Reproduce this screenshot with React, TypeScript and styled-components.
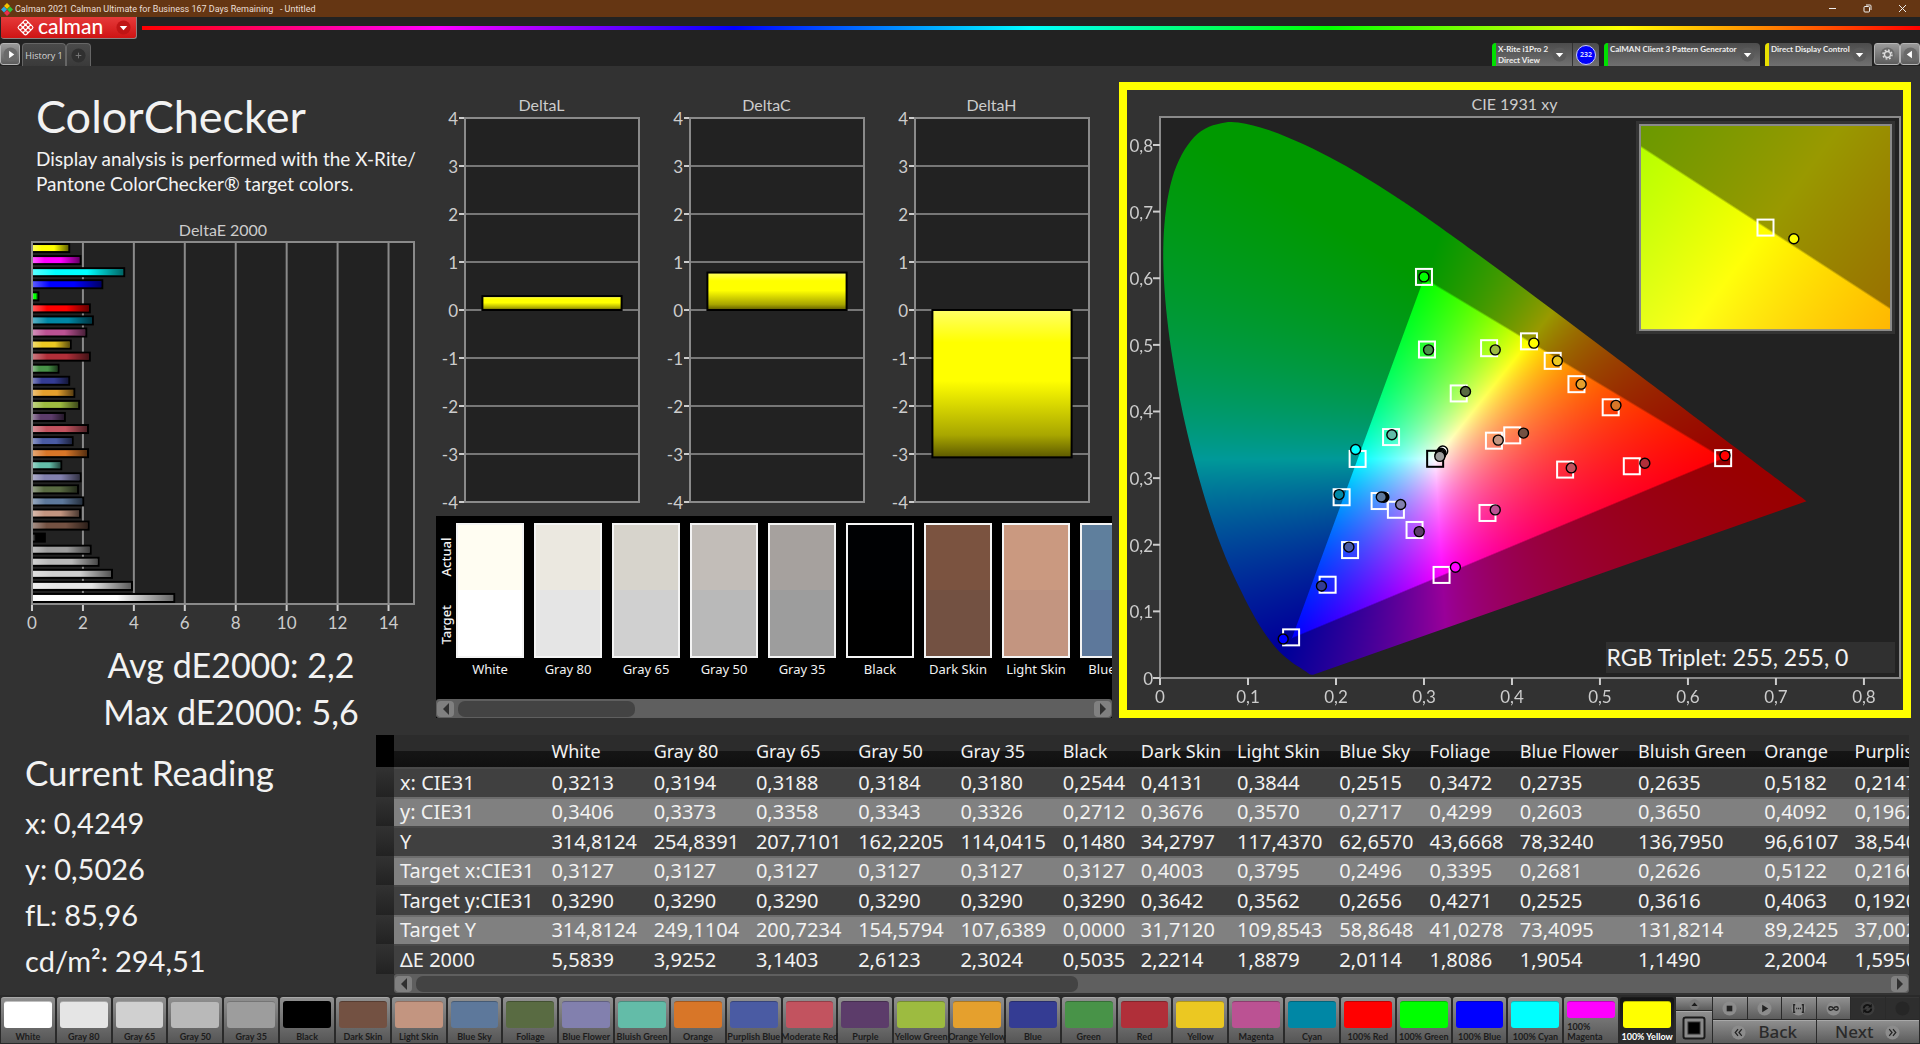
import React, { useLayoutEffect, useRef } from 'react';
import styled, { createGlobalStyle, css } from 'styled-components';

/* ---------- data ---------- */

type Patch = {
  name: string;
  color: string;
  actual: string;
  dE: number;
  target?: [number, number];
  measured: [number, number];
};

const patches: Patch[] = [
  { name: 'White', color: '#ffffff', actual: '#fffdf2', dE: 5.5839, target: [0.3127, 0.329], measured: [0.3213, 0.3406] },
  { name: 'Gray 80', color: '#e5e5e5', actual: '#ebe8e0', dE: 3.9252, measured: [0.3194, 0.3373] },
  { name: 'Gray 65', color: '#d0d0d0', actual: '#d7d4cc', dE: 3.1403, measured: [0.3188, 0.3358] },
  { name: 'Gray 50', color: '#b9b9b9', actual: '#c2bdb8', dE: 2.6123, measured: [0.3184, 0.3343] },
  { name: 'Gray 35', color: '#9d9d9d', actual: '#a6a19e', dE: 2.3024, measured: [0.318, 0.3326] },
  { name: 'Black', color: '#000000', actual: '#000103', dE: 0.5035, measured: [0.2544, 0.2712] },
  { name: 'Dark Skin', color: '#735142', actual: '#7b5340', dE: 2.2214, target: [0.4003, 0.3642], measured: [0.4131, 0.3676] },
  { name: 'Light Skin', color: '#c39580', actual: '#ca9980', dE: 1.8879, target: [0.3795, 0.3562], measured: [0.3844, 0.357] },
  { name: 'Blue Sky', color: '#5d789b', actual: '#5f7f9d', dE: 2.0114, target: [0.2496, 0.2656], measured: [0.2515, 0.2717] },
  { name: 'Foliage', color: '#596b42', actual: '#5e7042', dE: 1.8086, target: [0.3395, 0.4271], measured: [0.3472, 0.4299] },
  { name: 'Blue Flower', color: '#8280ae', actual: '#8685ae', dE: 1.9054, target: [0.2681, 0.2525], measured: [0.2735, 0.2603] },
  { name: 'Bluish Green', color: '#63bca8', actual: '#66c0a8', dE: 1.149, target: [0.2626, 0.3616], measured: [0.2635, 0.365] },
  { name: 'Orange', color: '#d87628', actual: '#de7a28', dE: 2.2004, target: [0.5122, 0.4063], measured: [0.5182, 0.4092] },
  { name: 'Purplish Blue', color: '#4a5ba3', actual: '#4a5ea4', dE: 1.595, target: [0.216, 0.192], measured: [0.2147, 0.1965] },
  { name: 'Moderate Red', color: '#c2535f', actual: '#c8565f', dE: 2.2, target: [0.4604, 0.3128], measured: [0.4674, 0.3153] },
  { name: 'Purple', color: '#5c3c6a', actual: '#603e6a', dE: 1.29, target: [0.2893, 0.2222], measured: [0.2946, 0.2197] },
  { name: 'Yellow Green', color: '#9dbb40', actual: '#a2be40', dE: 1.85, target: [0.374, 0.495], measured: [0.381, 0.4925] },
  { name: 'Orange Yellow', color: '#e5a02d', actual: '#e9a42d', dE: 1.66, target: [0.4733, 0.441], measured: [0.4786, 0.441] },
  { name: 'Blue', color: '#343c93', actual: '#343e93', dE: 1.46, target: [0.1905, 0.14], measured: [0.1835, 0.138] },
  { name: 'Green', color: '#489348', actual: '#4a9648', dE: 1.04, target: [0.3034, 0.493], measured: [0.3052, 0.4925] },
  { name: 'Red', color: '#b02f39', actual: '#b63139', dE: 2.27, target: [0.5362, 0.3178], measured: [0.551, 0.3223] },
  { name: 'Yellow', color: '#ebc822', actual: '#efcb22', dE: 1.52, target: [0.4463, 0.476], measured: [0.4516, 0.476] },
  { name: 'Magenta', color: '#bb5293', actual: '#c05593', dE: 2.13, target: [0.3722, 0.2477], measured: [0.381, 0.2523] },
  { name: 'Cyan', color: '#0087a5', actual: '#008aa5', dE: 2.39, target: [0.2064, 0.2713], measured: [0.2035, 0.2753] },
  { name: '100% Red', color: '#ff0000', actual: '#ff0000', dE: 2.27, target: [0.64, 0.33], measured: [0.6421, 0.3338] },
  { name: '100% Green', color: '#00ff00', actual: '#00ff00', dE: 0.25, target: [0.3, 0.602], measured: [0.3, 0.602] },
  { name: '100% Blue', color: '#0000ff', actual: '#0000ff', dE: 2.76, target: [0.149, 0.061], measured: [0.14, 0.0586] },
  { name: '100% Cyan', color: '#00ffff', actual: '#00ffff', dE: 3.62, target: [0.2246, 0.3288], measured: [0.2223, 0.3429] },
  { name: '100% Magenta', color: '#ff00ff', actual: '#ff00ff', dE: 1.9, target: [0.32, 0.1547], measured: [0.3357, 0.1662] },
  { name: '100% Yellow', color: '#ffff00', actual: '#ffff00', dE: 1.46, target: [0.4193, 0.5053], measured: [0.4249, 0.5026] },
];

const tableColumns: { name: string; width: number; values: string[] }[] = [
  { name: 'White', width: 102, values: ['0,3213', '0,3406', '314,8124', '0,3127', '0,3290', '314,8124', '5,5839'] },
  { name: 'Gray 80', width: 102, values: ['0,3194', '0,3373', '254,8391', '0,3127', '0,3290', '249,1104', '3,9252'] },
  { name: 'Gray 65', width: 102, values: ['0,3188', '0,3358', '207,7101', '0,3127', '0,3290', '200,7234', '3,1403'] },
  { name: 'Gray 50', width: 102, values: ['0,3184', '0,3343', '162,2205', '0,3127', '0,3290', '154,5794', '2,6123'] },
  { name: 'Gray 35', width: 102, values: ['0,3180', '0,3326', '114,0415', '0,3127', '0,3290', '107,6389', '2,3024'] },
  { name: 'Black', width: 78, values: ['0,2544', '0,2712', '0,1480', '0,3127', '0,3290', '0,0000', '0,5035'] },
  { name: 'Dark Skin', width: 96, values: ['0,4131', '0,3676', '34,2797', '0,4003', '0,3642', '31,7120', '2,2214'] },
  { name: 'Light Skin', width: 102, values: ['0,3844', '0,3570', '117,4370', '0,3795', '0,3562', '109,8543', '1,8879'] },
  { name: 'Blue Sky', width: 90, values: ['0,2515', '0,2717', '62,6570', '0,2496', '0,2656', '58,8648', '2,0114'] },
  { name: 'Foliage', width: 90, values: ['0,3472', '0,4299', '43,6668', '0,3395', '0,4271', '41,0278', '1,8086'] },
  { name: 'Blue Flower', width: 118, values: ['0,2735', '0,2603', '78,3240', '0,2681', '0,2525', '73,4095', '1,9054'] },
  { name: 'Bluish Green', width: 126, values: ['0,2635', '0,3650', '136,7950', '0,2626', '0,3616', '131,8214', '1,1490'] },
  { name: 'Orange', width: 90, values: ['0,5182', '0,4092', '96,6107', '0,5122', '0,4063', '89,2425', '2,2004'] },
  { name: 'Purplish Blue', width: 126, values: ['0,2147', '0,1962', '38,5403', '0,2160', '0,1920', '37,0022', '1,5950'] },
];

const rowLabels = ['x: CIE31', 'y: CIE31', 'Y', 'Target x:CIE31', 'Target y:CIE31', 'Target Y', 'ΔE 2000'];

/* ---------- base ---------- */

const sans = `'Lato', 'Open Sans', sans-serif`;
const uiSans = `'Noto Sans', 'Open Sans', sans-serif`;

const GlobalStyle = createGlobalStyle`
  * { box-sizing: border-box; }
  html, body { margin: 0; padding: 0; }
  body { background: #323232; color: #f2f2f2; font-family: ${sans}; }
  button { font: inherit; color: inherit; margin: 0; padding: 0; border: 0; background: none; cursor: pointer; }
  h1, h2, p, dl, dd { margin: 0; font-weight: 400; }
`;

const Page = styled.div`
  display: flex;
  flex-direction: column;
  min-height: 100vh;
  overflow: hidden;
`;

/* ---------- title bar ---------- */

const TitleBar = styled.header`
  display: flex;
  align-items: center;
  height: 17px;
  padding-left: 1px;
  background: #653613;
  color: #eadfd6;
  font-family: Roboto, 'Open Sans', sans-serif;
  font-size: 9px;
  white-space: pre;
`;

const TitleText = styled.span`
  flex: 1;
  padding-left: 2px;
`;

const WindowButton = styled.button`
  width: 35px;
  height: 17px;
  display: grid;
  place-items: center;
`;

/* ---------- tool strip ---------- */

const Strip = styled.div`
  background: #222;
`;

const BrandRow = styled.div`
  display: flex;
  align-items: flex-start;
  gap: 5px;
  height: 26px;
  padding-left: 1px;
`;

const Brand = styled.button`
  display: flex;
  align-items: center;
  width: 136px;
  height: 22px;
  padding: 0 5px 0 15px;
  gap: 3px;
  background: linear-gradient(#e63a3a, #cf1414);
  border-bottom: 1px solid #8d8080;
  border-right: 1px solid #8d8080;
  border-radius: 0 0 3px 3px;
  color: #fff;
  font-size: 21px;
  line-height: 18px;
  font-weight: 500;
`;

const BrandName = styled.span`
  flex: 1;
  text-align: left;
  padding-bottom: 4px;
`;

const Rainbow = styled.div`
  flex: 1;
  height: 4px;
  margin-top: 9px;
  background: linear-gradient(90deg, #f00, #f0f, #00f, #0ff, #0f0, #ff0, #f00);
`;

const TabRow = styled.div`
  display: flex;
  align-items: flex-start;
  height: 23px;
`;

const Spacer = styled.div`
  flex: 1;
`;

const SquareButton = styled.button<{ $width: number }>`
  display: grid;
  place-items: center;
  width: ${(p) => p.$width}px;
  height: 22px;
  border: 1px solid #b4b4b4;
  border-radius: 3px;
  background: linear-gradient(#9a9a9a, #5c5c5c);
`;

const Tab = styled.button<{ $width: number }>`
  display: grid;
  place-items: center;
  width: ${(p) => p.$width}px;
  height: 23px;
  border: 1px solid #666;
  border-bottom: 0;
  border-radius: 4px 4px 0 0;
  background: linear-gradient(#4a4a4a, #3a3a3a);
  color: #d6d6d6;
  font-family: 'Open Sans', sans-serif;
  font-size: 9px;
`;

const HistoryTabs = styled.div`
  display: flex;
  margin-left: 2px;
`;

const DeviceTabs = styled.div`
  display: flex;
  gap: 5px;
  margin-right: 2px;
`;

const DeviceTab = styled.div<{ $width: number }>`
  display: flex;
  width: ${(p) => p.$width}px;
  height: 23px;
  overflow: hidden;
  border-radius: 4px 4px 0 0;
  background: linear-gradient(#4c4c4c, #707070);
`;

const DeviceButton = styled.button<{ $status: string }>`
  display: flex;
  flex: 1;
  padding: 0 5px 0 2px;
  border-left: 4px solid ${(p) => p.$status};
  color: #eee;
  font-size: 8px;
  font-weight: 700;
  line-height: 11px;
  text-align: left;
  white-space: pre;
`;

const DeviceName = styled.span`
  flex: 1;
  padding-top: 1px;
`;

const DeviceArrow = styled.span`
  flex: none;
  align-self: center;
  display: grid;
`;

const Badge = styled.span`
  display: grid;
  place-items: center;
  width: 27px;
  border-left: 1px solid #333;

  span {
    width: 20px;
    height: 20px;
    border-radius: 50%;
    border: 1px solid #c8c8ff;
    background: #0000fa;
    color: #d6d6ff;
    font: 700 7px/18px 'Open Sans', sans-serif;
    text-align: center;
  }
`;

/* ---------- work area ---------- */

const Upper = styled.main`
  flex: 1;
  display: grid;
  grid-template-columns: 436fr 683fr 792fr;
  padding: 16px 9px 0 0;
  min-height: 0;
`;

const Column = styled.section`
  display: flex;
  flex-direction: column;
  min-width: 0;
`;

const SummaryColumn = styled(Column)`
  padding: 4px 22px 0 32px;
`;

const DeltaColumn = styled(Column)`
  padding-right: 7px;
`;

const Title = styled.h1`
  padding-left: 4px;
  font-size: 45px;
  line-height: 60px;
`;

const Intro = styled.p`
  padding-left: 4px;
  font-size: 19px;
  line-height: 25px;
  white-space: nowrap;
`;

const ChartTitle = styled.h2<{ $height: number }>`
  height: ${(p) => p.$height}px;
  line-height: ${(p) => p.$height}px;
  color: #ccc;
  font-size: 16px;
  text-align: center;
`;

const DeltaETitle = styled(ChartTitle)`
  margin-top: 22px;
`;

const DeltaTitle = styled(ChartTitle)`
  margin-bottom: 2px;
  padding-left: 8px;
`;

const BarPlotBox = styled.div`
  flex: 1;
  min-height: 300px;
  margin-bottom: 37px;
`;

const Averages = styled.p`
  padding-left: 16px;
  font-size: 34px;
  line-height: 47px;
  text-align: center;
`;

const Plot = styled.svg`
  display: block;
  width: 100%;
  height: 100%;
  overflow: visible;

  text {
    fill: #ccc;
    font-family: ${sans};
    font-size: 17px;
  }
`;

const DeltaRow = styled.div`
  flex: 1;
  display: grid;
  grid-template-columns: repeat(3, 1fr);
  column-gap: 22px;
  padding: 11px 23px 14px 0;
  min-height: 300px;
`;

const DeltaChart = styled.figure`
  display: flex;
  flex-direction: column;
  margin: 0;
`;

const DeltaPlotBox = styled.div`
  flex: 1;
  margin-left: 29px;
`;

/* ---------- swatch strip ---------- */

const SwatchPanel = styled.div`
  display: flex;
  flex-direction: column;
  background: #000;
  margin-bottom: 17px;
`;

const SwatchBody = styled.div`
  display: flex;
  height: 183px;
  padding-top: 7px;
  overflow: hidden;
`;

const SideLabels = styled.div`
  flex: none;
  display: flex;
  flex-direction: column;
  width: 20px;
  height: 135px;
`;

const SideLabel = styled.span`
  flex: 1;
  writing-mode: vertical-rl;
  transform: rotate(180deg);
  font-family: ${uiSans};
  font-size: 13px;
  font-weight: 500;
  line-height: 20px;
  text-align: center;
`;

const SwatchList = styled.div`
  display: flex;
  gap: 10px;
`;

const Swatch = styled.div`
  flex: none;
  width: 68px;
  font-family: ${uiSans};
  font-size: 13px;
  line-height: 23px;
  text-align: center;
  white-space: nowrap;
`;

const SwatchColor = styled.div<{ $actual: string; $target: string }>`
  height: 135px;
  border: 2px solid #f4f4f4;
  background: linear-gradient(${(p) => p.$actual} 50%, ${(p) => p.$target} 50%);
`;

const ScrollTrack = styled.div`
  display: flex;
  align-items: center;
  gap: 4px;
  height: 19px;
  padding: 0 1px;
  border-radius: 3px;
  background: #5f5f5f;
`;

const ScrollArrow = styled.button`
  display: grid;
  place-items: center;
  width: 17px;
  height: 16px;
  border-radius: 4px;
  background: #808080;
`;

const ScrollRail = styled.div`
  flex: 1;
`;

const ScrollThumb = styled.div`
  height: 16px;
  border-radius: 7px;
  background: #434343;
`;

/* ---------- CIE chart ---------- */

const CieFrame = styled.div`
  flex: 1;
  display: flex;
  flex-direction: column;
  margin-bottom: 17px;
  padding: 0 3px 32px 33px;
  border: 8px solid #ffff00;
`;

const CieTitle = styled(ChartTitle)`
  padding-right: 31px;
`;

const CiePlotBox = styled.div`
  position: relative;
  flex: 1;
  background: #222;
`;

const Field = styled.canvas`
  position: absolute;
  inset: 0;
  width: 100%;
  height: 100%;
`;

const Overlay = styled(Plot)`
  position: absolute;
  inset: 0;
`;

const Inset = styled.div`
  position: absolute;
  top: 4px;
  right: 5px;
  width: 35%;
  height: 38%;
  padding: 3px;
  background: #333;
`;

const InsetInner = styled.div`
  position: relative;
  width: 100%;
  height: 100%;
  overflow: hidden;
`;

const Triplet = styled.div`
  position: absolute;
  right: 5px;
  bottom: 5px;
  width: 39%;
  height: 31px;
  background: #303030;
  font-size: 23px;
  line-height: 31px;
`;

/* ---------- readings + table ---------- */

const Lower = styled.section`
  display: grid;
  grid-template-columns: 376fr 1533fr;
  padding-right: 11px;
  height: 260px;
`;

const Readings = styled.div`
  padding: 13px 0 0 25px;
`;

const ReadingTitle = styled.h2`
  margin-bottom: 4px;
  font-size: 35px;
  line-height: 48px;
`;

const ReadingList = styled.dl`
  font-size: 29px;
  line-height: 46px;

  div {
    display: flex;
    gap: 7px;
  }
`;

const TableArea = styled.div`
  min-width: 0;
`;

const TableClip = styled.div`
  overflow: hidden;
`;

const DataTable = styled.table`
  border-collapse: collapse;
  table-layout: fixed;
  width: 1599px;
  font-family: ${uiSans};
  white-space: nowrap;

  th, td {
    padding: 0 0 0 6px;
    font-weight: 400;
    text-align: left;
  }

  thead tr {
    height: 32px;
    background: linear-gradient(#2c2c2c 50%, #151515 50%, #101010);
    font-size: 18px;
    line-height: 27px;
  }

  tbody tr {
    height: 30px;
    background: linear-gradient(#494949 2px, #404040 2px);
    font-size: 20px;
    line-height: 27px;
  }

  tbody tr:nth-child(even) {
    height: 29px;
    background: linear-gradient(#6d6d6d 2px, #808080 2px);
  }

  thead td:first-child {
    background: #000;
  }

  tbody td:first-child {
    background: linear-gradient(#323232, #222);
  }
`;

const TableScroll = styled.div`
  padding-left: 18px;
`;

/* ---------- bottom bar ---------- */

const BottomBar = styled.footer`
  display: flex;
  height: 49px;
  padding: 2px 1px 1px 1px;
  background: #2a2a2a;
`;

const PatchButtons = styled.div`
  flex: 1;
  display: grid;
  grid-template-columns: repeat(30, 1fr);
  column-gap: 2px;
`;

const PatchButton = styled.button<{ $selected: boolean }>`
  display: flex;
  flex-direction: column;
  align-items: center;
  min-width: 0;
  height: 46px;
  padding: 3px 3px 1px;
  border-radius: 3px 3px 0 0;
  background: linear-gradient(#8f8f8f, #555);
  border-top: 1px solid #a8a8a8;
  color: #1c1c1c;
  font-size: 9px;
  font-weight: 700;
  line-height: 10px;
  white-space: nowrap;
  ${(p) =>
    p.$selected &&
    css`
      background: linear-gradient(#141414, #2e2e2e);
      border-top-color: #1a1a1a;
      color: #fff;
    `}
`;

const PatchColor = styled.span<{ $color: string }>`
  flex: 1;
  align-self: stretch;
  margin-bottom: 4px;
  border-radius: 3px;
  border-top: 1px solid rgba(0, 0, 0, 0.25);
  background: ${(p) => p.$color};
`;

const PatchLabel = styled.span<{ $wrap: boolean }>`
  white-space: ${(p) => (p.$wrap ? 'normal' : 'nowrap')};
  text-align: left;
`;

const Transport = styled.div`
  display: grid;
  grid-template-columns: 36px 206px;
  column-gap: 1px;
  margin-left: 2px;
`;

const PatternColumn = styled.div`
  display: grid;
  grid-template-rows: 13px 1fr;
  row-gap: 1px;
`;

const ControlGrid = styled.div`
  display: grid;
  grid-template-columns: repeat(6, 1fr);
  grid-template-rows: 22px 1fr;
  gap: 1px;
`;

const Control = styled.button<{ $dim?: boolean; $span?: number }>`
  display: flex;
  align-items: center;
  justify-content: center;
  gap: 12px;
  grid-column: span ${(p) => p.$span ?? 1};
  background: ${(p) => (p.$dim ? '#2e2e2e' : 'linear-gradient(#8e8e8e, #5c5c5c)')};
  border-top: 1px solid ${(p) => (p.$dim ? '#363636' : '#a8a8a8')};
  color: #2a2a2a;
  font-family: ${uiSans};
  font-size: 17px;
  font-weight: 500;
  line-height: 20px;
`;

/* ---------- small drawings ---------- */

const Disc = ({ size = 15, fill = '#6a6a6a', children }: { size?: number; fill?: string; children?: React.ReactNode }) => (
  <svg width={size} height={size} viewBox="0 0 16 16" aria-hidden="true">
    <circle cx="8" cy="8" r="7.5" fill={fill} />
    {children}
  </svg>
);

const AppIcon = () => (
  <svg width="12" height="14" viewBox="0 0 12 14" aria-hidden="true">
    <path d="M6 1l3 3-3 3-3-3z" fill="#f5c400" />
    <path d="M3 4.5l3 3-3 3-3-3z" fill="#2fa8e0" />
    <path d="M9 4.5l3 3-3 3-3-3z" fill="#2fc43c" />
    <path d="M6 8l3 3-3 3-3-3z" fill="#ee2d4e" />
  </svg>
);

const BrandMark = () => (
  <svg width="19" height="19" viewBox="0 0 20 20" aria-hidden="true">
    <rect x="3.4" y="3.4" width="13.2" height="13.2" rx="2.4" transform="rotate(45 10 10)" fill="#fff" />
    {[0, 1, 2].map((r) =>
      [0, 1, 2].map((c) => (
        <circle key={`${r}${c}`} cx={10 + (c - r) * 2.8} cy={10 + (c + r - 2) * 2.8} r="1.5" fill="#dc2a2a" />
      )),
    )}
  </svg>
);

const Triangle = ({ dir }: { dir: 'left' | 'right' }) => (
  <svg width="8" height="12" viewBox="0 0 8 12" aria-hidden="true">
    <path d={dir === 'left' ? 'M7 0v12L1 6z' : 'M1 0v12l6-6z'} fill="#303030" />
  </svg>
);

const DownArrow = () => (
  <Disc fill="#5a5a5a">
    <path d="M4 6.5h8L8 11z" fill="#fff" />
  </Disc>
);

/* ---------- scroll bar ---------- */

const HScroll = ({ share, label }: { share: number; label: string }) => (
  <ScrollTrack>
    <ScrollArrow aria-label={`${label}: scroll left`}>
      <Triangle dir="left" />
    </ScrollArrow>
    <ScrollRail>
      <ScrollThumb style={{ width: `${share}%` }} />
    </ScrollRail>
    <ScrollArrow aria-label={`${label}: scroll right`}>
      <Triangle dir="right" />
    </ScrollArrow>
  </ScrollTrack>
);

/* ---------- DeltaE chart ---------- */

const AXIS = '#8a8a8a';
const pct = (v: number) => `${v * 100}%`;

const DeltaEPlot = () => {
  const max = 15;
  const bars = [...patches].reverse();
  const step = 1 / bars.length;
  return (
    <Plot role="img" aria-label="DeltaE 2000 for every patch">
      <defs>
        <linearGradient id="glossX">
          <stop offset="0" stopColor="#fff" stopOpacity="0.35" />
          <stop offset="0.25" stopColor="#fff" stopOpacity="0" />
          <stop offset="0.6" stopColor="#000" stopOpacity="0" />
          <stop offset="1" stopColor="#000" stopOpacity="0.6" />
        </linearGradient>
      </defs>
      <rect width="100%" height="100%" fill="#222" />
      {[0, 2, 4, 6, 8, 10, 12, 14].map((v) => (
        <React.Fragment key={v}>
          <line x1={pct(v / max)} x2={pct(v / max)} y1="0" y2="100%" stroke={AXIS} strokeWidth="2" />
          <svg x={pct(v / max)} y="100%" overflow="visible">
            <line y2="7" stroke="#ccc" strokeWidth="2" />
            <text y="25" textAnchor="middle">{v}</text>
          </svg>
        </React.Fragment>
      ))}
      <rect width="100%" height="100%" fill="none" stroke={AXIS} strokeWidth="2" />
      {bars.map((b, i) => (
        <svg key={b.name} x="1" y={pct(step * (i + 0.5))} width="100%" overflow="visible">
          <rect y="-5" width={pct(b.dE / max)} height="10" fill="#000" />
          <rect y="-3" width={pct((b.dE - 0.08) / max)} height="6" fill={b.color} />
          <rect y="-3" width={pct((b.dE - 0.08) / max)} height="6" fill="url(#glossX)" />
        </svg>
      ))}
    </Plot>
  );
};

/* ---------- DeltaL / C / H charts ---------- */

const DeltaPlot = ({ name, value }: { name: string; value: number }) => {
  const yOf = (v: number) => (4 - v) / 8;
  const id = `gloss${name}`;
  return (
    <DeltaChart>
      <DeltaTitle as="figcaption" $height={23}>{name}</DeltaTitle>
      <DeltaPlotBox>
        <Plot role="img" aria-label={name}>
          <defs>
            <linearGradient id={id} x2="0" y2="1">
              <stop offset="0" stopColor="#ffff66" />
              <stop offset="0.22" stopColor="#ffff00" />
              <stop offset="0.48" stopColor="#ffff00" />
              <stop offset="0.85" stopColor="#a8a600" />
              <stop offset="1" stopColor="#5c5900" />
            </linearGradient>
          </defs>
          <rect width="100%" height="100%" fill="#222" />
          {[4, 3, 2, 1, 0, -1, -2, -3, -4].map((v) => (
            <svg key={v} y={pct(yOf(v))} width="100%" overflow="visible">
              <line x2="100%" stroke="#777" strokeWidth="2" />
              <line x1="-6" x2="0" stroke="#ccc" strokeWidth="2" />
              <text x="-7" y="7" textAnchor="end">{v}</text>
            </svg>
          ))}
          <rect width="100%" height="100%" fill="none" stroke={AXIS} strokeWidth="2" />
          <rect
            x="10%"
            width="80%"
            y={pct(yOf(Math.max(value, 0)))}
            height={pct(Math.abs(value) / 8)}
            fill={`url(#${id})`}
            stroke="#000"
            strokeWidth="2"
          />
        </Plot>
      </DeltaPlotBox>
    </DeltaChart>
  );
};

/* ---------- chromaticity diagram ---------- */

const locus: [number, number][] = [
  [0.1741, 0.005], [0.1733, 0.0048], [0.1714, 0.0051], [0.1689, 0.0069], [0.1644, 0.0109], [0.1566, 0.0177],
  [0.151, 0.0227], [0.144, 0.0297], [0.1355, 0.0399], [0.1241, 0.0578], [0.1096, 0.0868], [0.0913, 0.1327],
  [0.0687, 0.2007], [0.0454, 0.295], [0.0235, 0.4127], [0.0082, 0.5384], [0.0039, 0.6548], [0.0139, 0.7502],
  [0.0389, 0.812], [0.0743, 0.8338], [0.1142, 0.8262], [0.1547, 0.8059], [0.1929, 0.7816], [0.2296, 0.7543],
  [0.2658, 0.7243], [0.3016, 0.6923], [0.3731, 0.6245], [0.4441, 0.5547], [0.5125, 0.4866], [0.5752, 0.4242],
  [0.627, 0.3725], [0.6658, 0.334], [0.6915, 0.3083], [0.719, 0.2809], [0.7347, 0.2653],
];

type View = { x0: number; x1: number; y0: number; y1: number };

const mainView: View = { x0: 0, x1: 0.841, y0: 0, y1: 0.842 };
const insetView: View = { x0: 0.3943, x1: 0.4443, y0: 0.4803, y1: 0.5303 };

function paintField(canvas: HTMLCanvasElement, view: View) {
  const w = canvas.clientWidth;
  const h = canvas.clientHeight;
  if (!w || !h) return;
  canvas.width = w;
  canvas.height = h;

  const buffer = document.createElement('canvas');
  buffer.width = w;
  buffer.height = h;
  const bctx = buffer.getContext('2d')!;
  const img = bctx.createImageData(w, h);
  const softness = ((view.x1 - view.x0) / w) * 4;

  for (let py = 0; py < h; py++) {
    const y = view.y1 - ((py + 0.5) / h) * (view.y1 - view.y0);
    for (let px = 0; px < w; px++) {
      const x = view.x0 + ((px + 0.5) / w) * (view.x1 - view.x0);
      const z = 1 - x - y;
      let r = 3.2406 * x - 1.5372 * y - 0.4986 * z;
      let g = -0.9689 * x + 1.8758 * y + 0.0415 * z;
      let b = 0.0557 * x - 0.204 * y + 1.057 * z;
      const inside = Math.min(1, Math.max(0, Math.min(r, g, b) / softness + 0.5));
      r = Math.max(r, 0);
      g = Math.max(g, 0);
      b = Math.max(b, 0);
      const scale = (255 / Math.max(r, g, b)) * (0.6 + 0.4 * inside);
      const i = (py * w + px) * 4;
      img.data[i] = r * scale;
      img.data[i + 1] = g * scale;
      img.data[i + 2] = b * scale;
      img.data[i + 3] = 255;
    }
  }
  bctx.putImageData(img, 0, 0);

  const ctx = canvas.getContext('2d')!;
  const pts = locus.map(([x, y]) => [
    ((x - view.x0) / (view.x1 - view.x0)) * w,
    ((view.y1 - y) / (view.y1 - view.y0)) * h,
  ]);
  ctx.beginPath();
  ctx.moveTo(pts[0][0], pts[0][1]);
  for (let i = 0; i < pts.length - 1; i++) {
    const a = pts[Math.max(i - 1, 0)];
    const p = pts[i];
    const q = pts[i + 1];
    const c = pts[Math.min(i + 2, pts.length - 1)];
    ctx.bezierCurveTo(
      p[0] + (q[0] - a[0]) / 6, p[1] + (q[1] - a[1]) / 6,
      q[0] - (c[0] - p[0]) / 6, q[1] - (c[1] - p[1]) / 6,
      q[0], q[1],
    );
  }
  ctx.closePath();
  ctx.clip();
  ctx.drawImage(buffer, 0, 0);
}

const ChromaField = ({ view }: { view: View }) => {
  const ref = useRef<HTMLCanvasElement>(null);
  useLayoutEffect(() => {
    const canvas = ref.current!;
    const paint = () => paintField(canvas, view);
    paint();
    window.addEventListener('resize', paint);
    return () => window.removeEventListener('resize', paint);
  }, [view]);
  return <Field ref={ref} aria-hidden="true" />;
};

const Markers = ({ view, items }: { view: View; items: Patch[] }) => {
  const at = ([x, y]: [number, number]) => ({
    x: pct((x - view.x0) / (view.x1 - view.x0)),
    y: pct((view.y1 - y) / (view.y1 - view.y0)),
  });
  return (
    <>
      {items.map((p) => p.target && (
        <svg key={p.name} {...at(p.target)} overflow="visible">
          <rect x="-8" y="-8" width="16" height="16" fill="none" stroke={p.name === 'White' ? '#000' : '#fff'} strokeWidth="2" />
        </svg>
      ))}
      {items.map((p) => (
        <svg key={p.name} {...at(p.measured)} overflow="visible">
          <circle r="5" fill={p.color} stroke="#000" strokeWidth="1.4" />
        </svg>
      ))}
    </>
  );
};

const ticks = [0, 0.1, 0.2, 0.3, 0.4, 0.5, 0.6, 0.7, 0.8];
const tickText = (v: number) => String(v).replace('.', ',');

const CieChart = () => (
  <CieFrame>
    <CieTitle $height={27}>CIE 1931 xy</CieTitle>
    <CiePlotBox>
      <ChromaField view={mainView} />
      <Overlay role="img" aria-label="CIE 1931 xy chromaticity diagram">
        <rect width="100%" height="100%" fill="none" stroke={AXIS} strokeWidth="2" />
        {ticks.map((v) => (
          <React.Fragment key={v}>
            <svg x={pct(v / mainView.x1)} y="100%" overflow="visible">
              <line y2="7" stroke="#ccc" strokeWidth="2" />
              <text y="25" textAnchor="middle">{tickText(v)}</text>
            </svg>
            <svg y={pct(1 - v / mainView.y1)} overflow="visible">
              <line x1="-7" x2="0" stroke="#ccc" strokeWidth="2" />
              <text x="-7" y="7" textAnchor="end">{tickText(v)}</text>
            </svg>
          </React.Fragment>
        ))}
        <Markers view={mainView} items={patches} />
      </Overlay>
      <Inset>
        <InsetInner>
          <ChromaField view={insetView} />
          <Overlay aria-hidden="true">
            <rect width="100%" height="100%" fill="none" stroke={AXIS} strokeWidth="4" />
            <Markers view={insetView} items={patches.slice(-1)} />
          </Overlay>
        </InsetInner>
      </Inset>
      <Triplet>RGB Triplet: 255, 255, 0</Triplet>
    </CiePlotBox>
  </CieFrame>
);

/* ---------- page ---------- */

const readings: [string, string][] = [
  ['x:', '0,4249'],
  ['y:', '0,5026'],
  ['fL:', '85,96'],
  ['cd/m²:', '294,51'],
];

export default function App() {
  return (
    <Page>
      <GlobalStyle />
      <TitleBar>
        <AppIcon />
        <TitleText>{'Calman 2021 Calman Ultimate for Business 167 Days Remaining   - Untitled'}</TitleText>
        <WindowButton aria-label="Minimize">
          <svg width="9" height="9" viewBox="0 0 9 9"><path d="M1 4.5h7" stroke="#eee" /></svg>
        </WindowButton>
        <WindowButton aria-label="Restore">
          <svg width="9" height="9" viewBox="0 0 9 9" fill="none" stroke="#eee">
            <rect x="1" y="2.5" width="5.5" height="5.5" rx="1" />
            <path d="M3 1h4a1 1 0 0 1 1 1v4" />
          </svg>
        </WindowButton>
        <WindowButton aria-label="Close">
          <svg width="9" height="9" viewBox="0 0 9 9"><path d="M1 1l7 7M8 1L1 8" stroke="#eee" /></svg>
        </WindowButton>
      </TitleBar>

      <Strip>
        <BrandRow>
          <Brand aria-label="calman menu">
            <BrandMark />
            <BrandName>calman</BrandName>
            <Disc fill="#c01515">
              <path d="M4 6.5h8L8 11z" fill="#fff" />
            </Disc>
          </Brand>
          <Rainbow />
        </BrandRow>
        <TabRow>
          <SquareButton $width={20} aria-label="Expand workflow">
            <Disc><path d="M6.5 4v8L12 8z" fill="#fff" /></Disc>
          </SquareButton>
          <HistoryTabs>
            <Tab $width={44}>History 1</Tab>
            <Tab $width={25} aria-label="Add history">
              <Disc fill="#303030"><path d="M8 5v6M5 8h6" stroke="#777" /></Disc>
            </Tab>
          </HistoryTabs>
          <Spacer />
          <DeviceTabs>
            <DeviceTab $width={107}>
              <DeviceButton $status="#00e000" aria-haspopup="menu">
                <DeviceName>{'X-Rite i1Pro 2\nDirect View'}</DeviceName>
                <DeviceArrow><DownArrow /></DeviceArrow>
              </DeviceButton>
              <Badge><span>232</span></Badge>
            </DeviceTab>
            <DeviceTab $width={156}>
              <DeviceButton $status="#00e000" aria-haspopup="menu">
                <DeviceName>CalMAN Client 3 Pattern Generator</DeviceName>
                <DeviceArrow><DownArrow /></DeviceArrow>
              </DeviceButton>
            </DeviceTab>
            <DeviceTab $width={107}>
              <DeviceButton $status="#e8e000" aria-haspopup="menu">
                <DeviceName>Direct Display Control</DeviceName>
                <DeviceArrow><DownArrow /></DeviceArrow>
              </DeviceButton>
            </DeviceTab>
          </DeviceTabs>
          <SquareButton $width={26} aria-label="Settings">
            <Disc>
              <circle cx="8" cy="8" r="3.2" fill="none" stroke="#ddd" strokeWidth="1.4" />
              <circle cx="8" cy="8" r="4.8" fill="none" stroke="#ddd" strokeWidth="1.6" strokeDasharray="1.9 1.87" />
            </Disc>
          </SquareButton>
          <SquareButton $width={20} aria-label="Collapse panel">
            <Disc><path d="M9.5 4v8L4 8z" fill="#fff" /></Disc>
          </SquareButton>
        </TabRow>
      </Strip>

      <Upper>
        <SummaryColumn>
          <Title>ColorChecker</Title>
          <Intro>
            Display analysis is performed with the X-Rite/
            <br />
            Pantone ColorChecker® target colors.
          </Intro>
          <DeltaETitle $height={24}>DeltaE 2000</DeltaETitle>
          <BarPlotBox>
            <DeltaEPlot />
          </BarPlotBox>
          <Averages>
            Avg dE2000: 2,2
            <br />
            Max dE2000: 5,6
          </Averages>
        </SummaryColumn>

        <DeltaColumn>
          <DeltaRow>
            <DeltaPlot name="DeltaL" value={0.29} />
            <DeltaPlot name="DeltaC" value={0.78} />
            <DeltaPlot name="DeltaH" value={-3.07} />
          </DeltaRow>
          <SwatchPanel>
            <SwatchBody>
              <SideLabels>
                <SideLabel>Actual</SideLabel>
                <SideLabel>Target</SideLabel>
              </SideLabels>
              <SwatchList>
                {patches.slice(0, 9).map((p) => (
                  <Swatch key={p.name}>
                    <SwatchColor $actual={p.actual} $target={p.color} />
                    {p.name}
                  </Swatch>
                ))}
              </SwatchList>
            </SwatchBody>
            <HScroll share={28} label="Swatches" />
          </SwatchPanel>
        </DeltaColumn>

        <Column>
          <CieChart />
        </Column>
      </Upper>

      <Lower>
        <Readings>
          <ReadingTitle>Current Reading</ReadingTitle>
          <ReadingList>
            {readings.map(([k, v]) => (
              <div key={k}>
                <dt>{k}</dt>
                <dd>{v}</dd>
              </div>
            ))}
          </ReadingList>
        </Readings>
        <TableArea>
          <TableClip>
            <DataTable>
              <colgroup>
                <col width={18} />
                <col width={151} />
                {tableColumns.map((c) => (
                  <col key={c.name} width={c.width} />
                ))}
              </colgroup>
              <thead>
                <tr>
                  <td />
                  <td />
                  {tableColumns.map((c) => (
                    <th key={c.name} scope="col">{c.name}</th>
                  ))}
                </tr>
              </thead>
              <tbody>
                {rowLabels.map((label, r) => (
                  <tr key={label}>
                    <td />
                    <th scope="row">{label}</th>
                    {tableColumns.map((c) => (
                      <td key={c.name}>{c.values[r]}</td>
                    ))}
                  </tr>
                ))}
              </tbody>
            </DataTable>
          </TableClip>
          <TableScroll>
            <HScroll share={45} label="Table" />
          </TableScroll>
        </TableArea>
      </Lower>

      <BottomBar>
        <PatchButtons>
          {patches.map((p) => (
            <PatchButton key={p.name} $selected={p.name === '100% Yellow'}>
              <PatchColor $color={p.color} />
              <PatchLabel $wrap={p.name === '100% Magenta'}>{p.name}</PatchLabel>
            </PatchButton>
          ))}
        </PatchButtons>
        <Transport>
          <PatternColumn>
            <Control aria-label="Show patterns">
              <Disc size={11} fill="#777"><path d="M3.5 10h9L8 5z" fill="#1c1c1c" /></Disc>
            </Control>
            <Control aria-label="Current pattern">
              <svg width="24" height="24" viewBox="0 0 24 24">
                <rect x="1.5" y="1.5" width="21" height="21" rx="2" fill="#8a8a8a" stroke="#1a1a1a" strokeWidth="2" />
                <rect x="6" y="6" width="12" height="12" fill="#000" stroke="#333" />
              </svg>
            </Control>
          </PatternColumn>
          <ControlGrid>
            <Control aria-label="Stop">
              <Disc fill="#8c8c8c"><path d="M5 5h6v6H5z" fill="#222" /></Disc>
            </Control>
            <Control aria-label="Play">
              <Disc fill="#8c8c8c"><path d="M5.5 4v8L12 8z" fill="#222" /></Disc>
            </Control>
            <Control aria-label="Read series">
              <Disc fill="#8c8c8c">
                <path d="M4.5 4H3v8h1.5M11.5 4H13v8h-1.5M5.5 8h1.2M7.5 8h1.2M9.5 8h1.2" fill="none" stroke="#222" strokeWidth="1.5" />
              </Disc>
            </Control>
            <Control aria-label="Read continuously">
              <Disc fill="#8c8c8c">
                <path d="M8 8C6.5 5.5 3 5.5 3 8s3.5 2.5 5 0 5-2.5 5 0-3.5 2.5-5 0z" fill="none" stroke="#222" strokeWidth="1.4" />
              </Disc>
            </Control>
            <Control aria-label="Refresh" $dim>
              <Disc fill="#3c3c3c">
                <path d="M4 8a4 4 0 0 1 7-2.5M12 8a4 4 0 0 1-7 2.5" fill="none" stroke="#111" strokeWidth="2" />
                <path d="M12.5 3v4h-4zM3.5 13V9h4z" fill="#111" />
              </Disc>
            </Control>
            <Control aria-label="Record" $dim>
              <Disc fill="#262626" />
            </Control>
            <Control $span={3}>
              <Disc fill="#8c8c8c"><path d="M7.5 4.5L4.5 8l3 3.5M11.5 4.5L8.5 8l3 3.5" fill="none" stroke="#222" strokeWidth="1.3" /></Disc>
              Back
            </Control>
            <Control $span={3}>
              Next
              <Disc fill="#8c8c8c"><path d="M4.5 4.5L7.5 8l-3 3.5M8.5 4.5L11.5 8l-3 3.5" fill="none" stroke="#222" strokeWidth="1.3" /></Disc>
            </Control>
          </ControlGrid>
        </Transport>
      </BottomBar>
    </Page>
  );
}
